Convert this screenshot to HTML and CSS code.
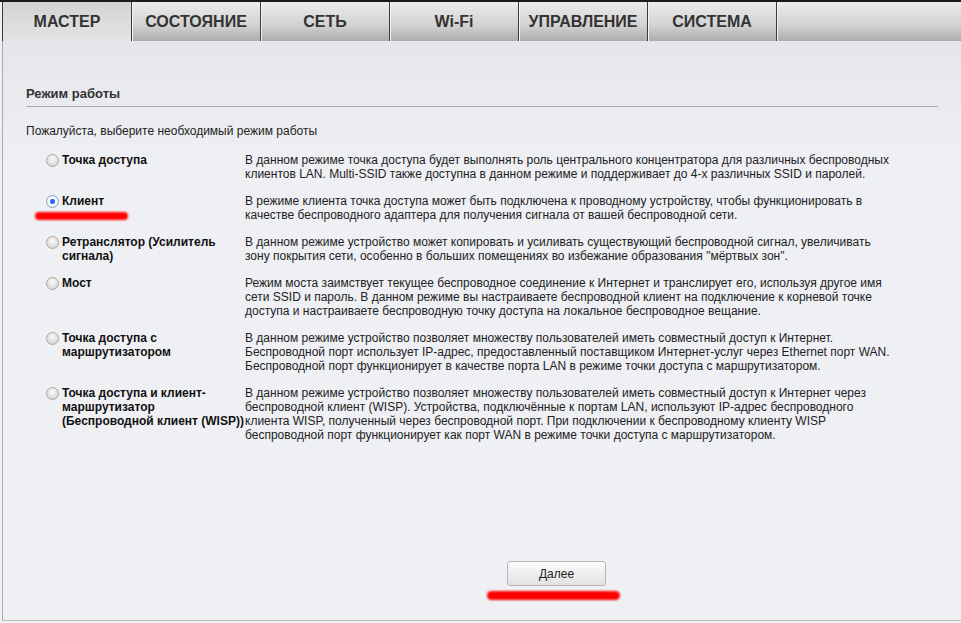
FILE: index.html
```html
<!DOCTYPE html>
<html lang="ru">
  <head>
    <meta charset="UTF-8" />
    <meta name="viewport" content="width=device-width, initial-scale=1.0" />
    <title>Мастер</title>
    <link rel="stylesheet" href="styles.css">
  </head>
  <body>
    <div class="topline"></div>
    <div class="page">
      <nav class="tabs">
        <div class="tab active">МАСТЕР</div>
        <div class="tab">СОСТОЯНИЕ</div>
        <div class="tab">СЕТЬ</div>
        <div class="tab">Wi-Fi</div>
        <div class="tab">УПРАВЛЕНИЕ</div>
        <div class="tab">СИСТЕМА</div>
        <div class="tab-fill"></div>
      </nav>
      <div class="content">
        <h2 class="section-title">Режим работы</h2>
        <p class="hint">Пожалуйста, выберите необходимый режим работы</p>
        <div class="modes">
          <div class="mode">
            <input type="radio" name="mode" class="radio" />
            <label class="mode-name">Точка доступа</label>
            <div class="mode-desc">В данном режиме точка доступа будет выполнять роль центрального концентратора для различных беспроводных<br>клиентов LAN. Multi-SSID также доступна в данном режиме и поддерживает до 4-х различных SSID и паролей.</div>
          </div>
          <div class="mode">
            <input type="radio" name="mode" class="radio" checked />
            <label class="mode-name">Клиент<span class="mark mark-client"></span></label>
            <div class="mode-desc">В режиме клиента точка доступа может быть подключена к проводному устройству, чтобы функционировать в<br>качестве беспроводного адаптера для получения сигнала от вашей беспроводной сети.</div>
          </div>
          <div class="mode">
            <input type="radio" name="mode" class="radio" />
            <label class="mode-name">Ретранслятор (Усилитель<br>сигнала)</label>
            <div class="mode-desc">В данном режиме устройство может копировать и усиливать существующий беспроводной сигнал, увеличивать<br>зону покрытия сети, особенно в больших помещениях во избежание образования "мёртвых зон".</div>
          </div>
          <div class="mode">
            <input type="radio" name="mode" class="radio" />
            <label class="mode-name">Мост</label>
            <div class="mode-desc">Режим моста заимствует текущее беспроводное соединение к Интернет и транслирует его, используя другое имя<br>сети SSID и пароль. В данном режиме вы настраиваете беспроводной клиент на подключение к корневой точке<br>доступа и настраиваете беспроводную точку доступа на локальное беспроводное вещание.</div>
          </div>
          <div class="mode">
            <input type="radio" name="mode" class="radio" />
            <label class="mode-name">Точка доступа с<br>маршрутизатором</label>
            <div class="mode-desc">В данном режиме устройство позволяет множеству пользователей иметь совместный доступ к Интернет.<br>Беспроводной порт использует IP-адрес, предоставленный поставщиком Интернет-услуг через Ethernet порт WAN.<br>Беспроводной порт функционирует в качестве порта LAN в режиме точки доступа с маршрутизатором.</div>
          </div>
          <div class="mode">
            <input type="radio" name="mode" class="radio" />
            <label class="mode-name">Точка доступа и клиент-<br>маршрутизатор<br>(Беспроводной клиент (WISP))</label>
            <div class="mode-desc">В данном режиме устройство позволяет множеству пользователей иметь совместный доступ к Интернет через<br>беспроводной клиент (WISP). Устройства, подключённые к портам LAN, используют IP-адрес беспроводного<br>клиента WISP, полученный через беспроводной порт. При подключении к беспроводному клиенту WISP<br>беспроводной порт функционирует как порт WAN в режиме точки доступа с маршрутизатором.</div>
          </div>
        </div>
        <div class="actions">
          <div class="btn-wrap">
            <button class="btn">Далее</button>
            <span class="mark mark-btn"></span>
          </div>
        </div>
      </div>
    </div>
  </body>
</html>
```

FILE: styles.css
```css
html,
body {
  margin: 0;
  padding: 0;
}
body {
  background-color: #eff0f4;
  font-family: "Liberation Sans", Arial, sans-serif;
  font-size: 12px;
  color: #222;
  width: 961px;
  height: 623px;
  overflow: hidden;
}
.topline {
  height: 2px;
  background-color: #1b1b1b;
}
.page {
  margin-left: 2px;
  border-left: 1px solid #a9a9a9;
  border-bottom: 1px solid #bdbdbd;
  height: 618px;
  background: linear-gradient(#e5e6ea 40px, #eff0f4 160px);
}
.tabs {
  display: flex;
  height: 39px;
  margin-left: -1px;
  border-left: 1px solid #3c3c3c;
}
.tab {
  width: 128px;
  border-right: 1px solid #3a3a3a;
  box-shadow: inset 1px 0 #f4f4f4;
  background: linear-gradient(#ececec, #d2d2d2 60%, #ababab);
  font-size: 16px;
  font-weight: bold;
  color: #333;
  text-align: center;
  line-height: 39px;
}
.tab.active {
  background: linear-gradient(#d3d3d3, #dcdcdc 50%, #e4e4e5);
  box-shadow: none;
}
.tab-fill {
  flex: 1;
  box-shadow: inset 1px 0 #f4f4f4;
  background: linear-gradient(#ececec, #d2d2d2 60%, #ababab);
}
.content {
  padding: 45px 23px 0 23px;
}
.section-title {
  margin: 0;
  font-size: 13px;
  font-weight: bold;
  color: #333;
  line-height: 16px;
  padding-bottom: 4px;
  border-bottom: 1px solid #a8a8a8;
}
.hint {
  margin: 17px 0 0 0;
  line-height: 14px;
}
.modes {
  margin: 15px 0 0 20px;
}
.mode {
  display: grid;
  grid-template-columns: 16px 183px 660px;
  line-height: 14px;
  padding-bottom: 13px;
}
.radio {
  appearance: none;
  -webkit-appearance: none;
  width: 13px;
  height: 13px;
  margin: 1px 0 0 0;
  border: 1px solid #a8a8a8;
  border-radius: 50%;
  background: radial-gradient(circle at 50% 35%, #fafafa, #dadada 70%, #c2c2c2);
  box-sizing: border-box;
}
.radio:checked {
  border-color: #8aa2bd;
  background: radial-gradient(circle, #1a5ee8 0, #3b7cf0 2.5px, #fff 3px, #eef2f8 5px);
}
.mode-name {
  position: relative;
  font-weight: bold;
  color: #111;
  white-space: nowrap;
}
.mode-desc {
  color: #222;
  white-space: nowrap;
}
.mark {
  position: absolute;
  background-color: #ff0000;
  border-radius: 5px;
  filter: blur(1px);
}
.mark-client {
  left: -27px;
  top: 18px;
  width: 93px;
  height: 8px;
}
.actions {
  margin-top: 106px;
  padding-left: 481px;
}
.btn-wrap {
  position: relative;
  width: 99px;
}
.btn {
  width: 99px;
  height: 25px;
  border: 1px solid #b5b5b5;
  border-radius: 3px;
  background: linear-gradient(#fbfbfb, #ececec 60%, #e2e2e2);
  font-family: "Liberation Sans", Arial, sans-serif;
  font-size: 12px;
  color: #222;
}
.mark-btn {
  left: -20px;
  top: 30px;
  width: 133px;
  height: 9px;
}
```
